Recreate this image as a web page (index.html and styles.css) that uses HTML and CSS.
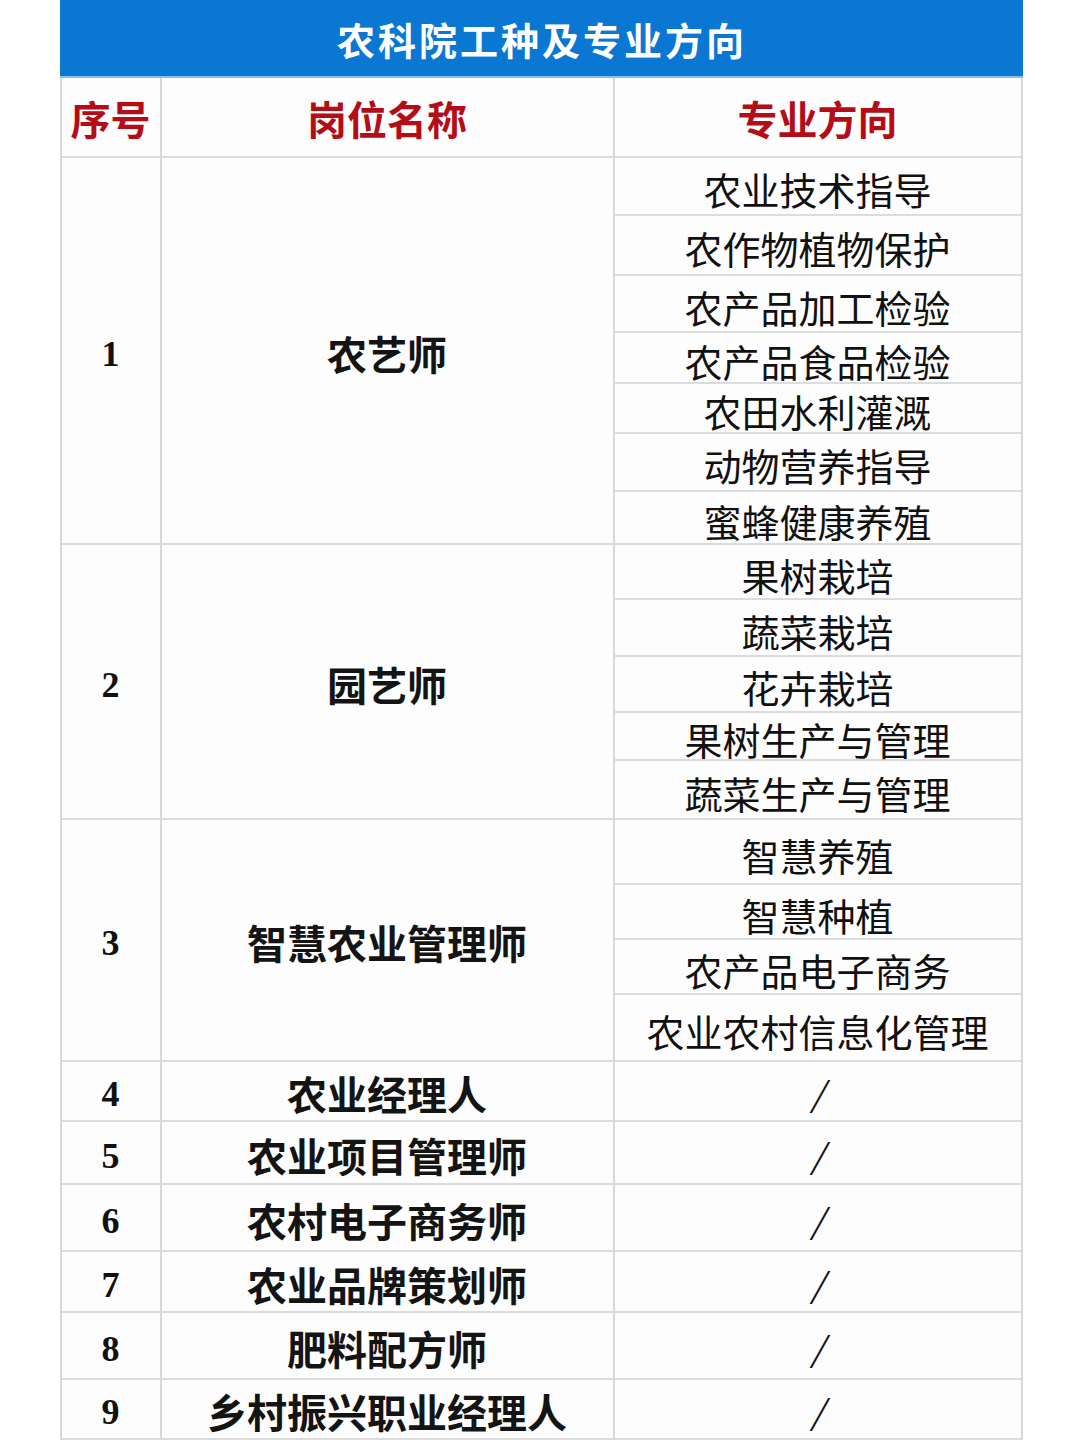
FILE: index.html
```html
<!DOCTYPE html>
<html lang="zh-CN">
<head>
<meta charset="utf-8">
<title>农科院工种及专业方向</title>
<link rel="stylesheet" href="styles.css">
</head>
<body>
<div class="sheet">
  <div class="title">农科院工种及专业方向</div>

  <div class="cell head">序号</div>
  <div class="cell head">岗位名称</div>
  <div class="cell head">专业方向</div>

  <div class="cell num span7">1</div>
  <div class="cell name span7">农艺师</div>
  <div class="cell dir">农业技术指导</div>
  <div class="cell dir">农作物植物保护</div>
  <div class="cell dir">农产品加工检验</div>
  <div class="cell dir">农产品食品检验</div>
  <div class="cell dir">农田水利灌溉</div>
  <div class="cell dir">动物营养指导</div>
  <div class="cell dir">蜜蜂健康养殖</div>

  <div class="cell num span5">2</div>
  <div class="cell name span5">园艺师</div>
  <div class="cell dir">果树栽培</div>
  <div class="cell dir">蔬菜栽培</div>
  <div class="cell dir">花卉栽培</div>
  <div class="cell dir">果树生产与管理</div>
  <div class="cell dir">蔬菜生产与管理</div>

  <div class="cell num span4">3</div>
  <div class="cell name span4">智慧农业管理师</div>
  <div class="cell dir">智慧养殖</div>
  <div class="cell dir">智慧种植</div>
  <div class="cell dir">农产品电子商务</div>
  <div class="cell dir">农业农村信息化管理</div>

  <div class="cell num">4</div>
  <div class="cell name">农业经理人</div>
  <div class="cell dir slash">/</div>

  <div class="cell num">5</div>
  <div class="cell name">农业项目管理师</div>
  <div class="cell dir slash">/</div>

  <div class="cell num">6</div>
  <div class="cell name">农村电子商务师</div>
  <div class="cell dir slash">/</div>

  <div class="cell num">7</div>
  <div class="cell name">农业品牌策划师</div>
  <div class="cell dir slash">/</div>

  <div class="cell num">8</div>
  <div class="cell name">肥料配方师</div>
  <div class="cell dir slash">/</div>

  <div class="cell num">9</div>
  <div class="cell name">乡村振兴职业经理人</div>
  <div class="cell dir slash">/</div>
</div>
</body>
</html>
```

FILE: styles.css
```css
* {
  box-sizing: border-box;
}

html, body {
  margin: 0;
  padding: 0;
  background: #ffffff;
}

body {
  width: 1080px;
  height: 1440px;
  overflow: hidden;
  font-family: "Noto Sans CJK SC", "Noto Sans", sans-serif;
  color: #111111;
}

.sheet {
  width: 961px;
  margin: 0 auto;
  display: grid;
  grid-template-columns: 100px 453px 408px;
  grid-template-rows:
    78px 80px
    58px 60px 57px 51px 50px 58px 53px
    55px 57px 56px 48px 59px
    65px 55px 55px 67px
    60px 63px 67px 61px 67px 60px;
  border-left: 2px solid #d8d8d8;
  background: #fdfdfd;
}

.title {
  grid-column: 1 / 4;
  background: #0a78d3;
  color: #ffffff;
  font-size: 38px;
  font-weight: 700;
  letter-spacing: 3px;
  display: flex;
  align-items: center;
  justify-content: center;
  border-bottom: 2px solid #7cc3ef;
  margin-left: -2px;
  padding-left: 2px;
}

.cell {
  display: flex;
  align-items: center;
  justify-content: center;
  border-right: 2px solid #d8d8d8;
  border-bottom: 2px solid #dcdcdc;
  white-space: nowrap;
  line-height: 1;
}

.head {
  color: #b40d17;
  font-size: 40px;
  font-weight: 700;
  padding-top: 2px;
}

.num {
  font-family: "Liberation Serif", "DejaVu Serif", serif;
  font-weight: 700;
  font-size: 36px;
  color: #111111;
  padding-top: 6px;
}

.name {
  font-size: 40px;
  font-weight: 700;
  color: #141414;
  padding-top: 4px;
}

.dir {
  font-size: 38px;
  font-weight: 400;
  color: #111111;
  padding-top: 6px;
}

.slash {
  font-style: italic;
  font-size: 34px;
  padding-top: 4px;
}

.span7 { grid-row: span 7; }
.span5 { grid-row: span 5; }
.span4 { grid-row: span 4; }
```
